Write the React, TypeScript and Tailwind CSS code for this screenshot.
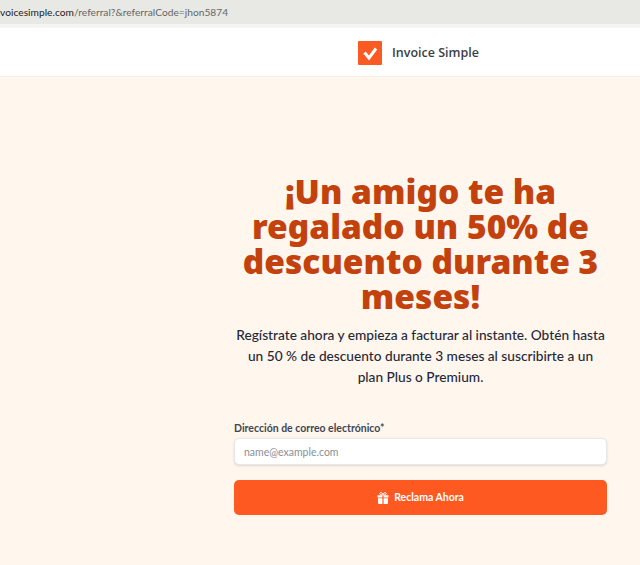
export default function App() {
  return (
    <div className="w-[640px] h-[565px] overflow-hidden bg-[#fff6ee] flex flex-col font-['Lato',sans-serif]">
      <div className="h-6 bg-[#e8e8e4] flex items-center overflow-hidden whitespace-nowrap shrink-0">
        <span className="text-[10.2px] mt-[1px] -ml-[8px] tracking-[0.02px] text-[#666] font-['Lato',sans-serif]">
          <span className="text-[#222]">invoicesimple.com</span>/referral?&amp;referralCode=jhon5874
        </span>
      </div>
      <div className="h-1 bg-[#f5f5f2] shrink-0" />
      <header className="h-[49px] bg-white border-b border-[#f3eee9] shrink-0 flex items-center pl-[358px] gap-[10px]">
        <svg width="24" height="24" viewBox="0 0 24 24" className="mt-[2px]">
          <rect width="24" height="24" rx="1" fill="#fb5a22" />
          <path d="M6.5 11.5 L11 17 L18 7.5" fill="none" stroke="#fff" strokeWidth="3" />
        </svg>
        <span className="text-[12.5px] mt-[2px] font-semibold text-[#3b3f45] font-['Open_Sans',sans-serif]">Invoice Simple</span>
      </header>
      <main className="flex-1 pl-[234px] pr-[33px] pt-[97px]">
        <h1 className="text-[33.5px] leading-[35px] font-black text-[#c2410c] text-center font-['Noto_Sans',sans-serif]">
          ¡Un amigo te ha regalado un 50% de descuento durante 3 meses!
        </h1>
        <p className="mt-[10px] text-[13.7px] leading-[21px] text-[#1f2937] text-center font-medium">
          Regístrate ahora y empieza a facturar al instante. Obtén hasta un 50 % de descuento durante 3 meses al suscribirte a un plan Plus o Premium.
        </p>
        <label className="block mt-[33px] text-[10.5px] leading-4 font-bold text-[#3f4650]">
          Dirección de correo electrónico*
        </label>
        <input
          readOnly
          placeholder="name@example.com"
          className="mt-[2px] block w-full h-[27px] rounded-[5px] bg-white px-[9px] text-[10.5px] border border-[#e5e7eb] shadow-sm placeholder:text-[#8a8f96] outline-none"
        />
        <button className="mt-[15px] w-full h-[35px] rounded-[5px] bg-[#fd5920] text-white text-[10.5px] font-bold flex items-center justify-center gap-[5px]">
          <svg width="12" height="12" viewBox="0 0 12 12" fill="#fff">
            <path d="M0.5 3.2h4.9v2.3H0.5zM6.6 3.2h4.9v2.3H6.6zM1 6.3h4.4V12H2a1 1 0 0 1-1-1zM6.6 6.3H11V11a1 1 0 0 1-1 1H6.6z" />
            <path d="M6 3C4.5 3 2.8 2.8 2.8 1.5 2.8.4 4.6-.2 6 2.3 7.4-.2 9.2.4 9.2 1.5 9.2 2.8 7.5 3 6 3z" fill="none" stroke="#fff" strokeWidth="1" />
          </svg>
          Reclama Ahora
        </button>
      </main>
    </div>
  );
}
